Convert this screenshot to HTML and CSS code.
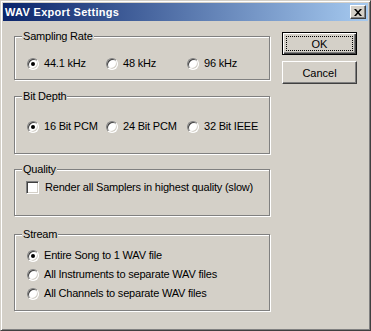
FILE: index.html
```html
<!DOCTYPE html>
<html>
<head>
  <title>WAV Export Settings</title>
  <link rel="stylesheet" href="styles.css">
</head>
<body>
  <div class="window">
    <div class="titlebar">
      <span class="title">WAV Export Settings</span>
      <span class="close-btn">
        <svg width="8" height="7" viewBox="0 0 8 7">
          <path d="M0 0h2l2 2.3 2-2.3h2l-3 3.5 3 3.5h-2l-2-2.3-2 2.3h-2l3-3.5z" fill="#000"/>
        </svg>
      </span>
    </div>

    <div class="client">
      <div class="groups">
        <div class="group group-rate">
          <span class="legend">Sampling Rate</span>
          <div class="options">
            <label class="option"><span class="radio checked"></span>44.1 kHz</label>
            <label class="option"><span class="radio"></span>48 kHz</label>
            <label class="option"><span class="radio"></span>96 kHz</label>
          </div>
        </div>

        <div class="group group-depth">
          <span class="legend">Bit Depth</span>
          <div class="options">
            <label class="option"><span class="radio checked"></span>16 Bit PCM</label>
            <label class="option"><span class="radio"></span>24 Bit PCM</label>
            <label class="option"><span class="radio"></span>32 Bit IEEE</label>
          </div>
        </div>

        <div class="group group-quality">
          <span class="legend">Quality</span>
          <label class="option"><span class="checkbox"></span>Render all Samplers in highest quality (slow)</label>
        </div>

        <div class="group group-stream">
          <span class="legend">Stream</span>
          <div class="stack">
            <label class="option"><span class="radio checked"></span>Entire Song to 1 WAV file</label>
            <label class="option"><span class="radio"></span>All Instruments to separate WAV files</label>
            <label class="option"><span class="radio"></span>All Channels to separate WAV files</label>
          </div>
        </div>
      </div>

      <div class="buttons">
        <button class="btn default">OK</button>
        <button class="btn">Cancel</button>
      </div>
    </div>
  </div>
</body>
</html>
```

FILE: styles.css
```css
body {
  margin: 0;
  background-color: #d4d0c8;
  font-family: "Liberation Sans", Arial, sans-serif;
  font-size: 11px;
  color: #000;
}

.window {
  box-sizing: border-box;
  width: 371px;
  height: 331px;
  padding: 2px;
  background-color: #d4d0c8;
  border: 1px solid;
  border-color: #d4d0c8 #404040 #404040 #d4d0c8;
  box-shadow: inset 1px 1px 0 #fff, inset -1px -1px 0 #808080;
}

.titlebar {
  display: flex;
  align-items: center;
  justify-content: space-between;
  height: 18px;
  padding: 0 2px;
  background: linear-gradient(to right, #0a246a, #a6caf0);
}

.title {
  color: #fff;
  font-weight: bold;
  letter-spacing: 0.3px;
  line-height: 18px;
}

.close-btn {
  box-sizing: border-box;
  display: flex;
  align-items: center;
  justify-content: center;
  width: 16px;
  height: 14px;
  background-color: #d4d0c8;
  border: 1px solid;
  border-color: #fff #404040 #404040 #fff;
  box-shadow: inset -1px -1px 0 #808080;
}

.client {
  display: flex;
  padding-left: 11px;
}

.groups {
  display: flex;
  flex-direction: column;
  width: 256px;
}

.group {
  position: relative;
  box-sizing: border-box;
  border: 1px solid #808080;
  box-shadow: inset 1px 1px 0 #fff, 1px 1px 0 #fff;
  padding-left: 12px;
  letter-spacing: -0.2px;
}

.group-rate {
  margin-top: 15px;
  height: 44px;
  padding-top: 20px;
}

.group-depth {
  margin-top: 16px;
  height: 58px;
  padding-top: 23px;
}

.group-quality {
  margin-top: 15px;
  height: 47px;
  padding-top: 11px;
  padding-left: 11px;
}

.group-stream {
  margin-top: 18px;
  height: 77px;
  padding-top: 14px;
}

.legend {
  position: absolute;
  top: -7px;
  left: 7px;
  padding: 0 1px;
  line-height: 13px;
  background-color: #d4d0c8;
}

.options {
  display: grid;
  grid-template-columns: 79px 81px auto;
}

.stack {
  display: flex;
  flex-direction: column;
  gap: 6px;
}

.option {
  display: flex;
  align-items: center;
  height: 13px;
  line-height: 13px;
  white-space: nowrap;
}

.radio {
  position: relative;
  box-sizing: border-box;
  width: 12px;
  height: 12px;
  margin-right: 5px;
  border-radius: 50%;
  background-color: #fff;
  border: 1px solid;
  border-color: #808080 #fff #fff #808080;
  box-shadow: inset 1px 1px 0 #404040, inset -1px -1px 0 #d4d0c8;
}

.radio.checked::after {
  content: "";
  position: absolute;
  left: 3px;
  top: 3px;
  width: 4px;
  height: 4px;
  border-radius: 50%;
  background-color: #000;
}

.checkbox {
  box-sizing: border-box;
  width: 13px;
  height: 13px;
  margin-right: 6px;
  background-color: #fff;
  border: 1px solid;
  border-color: #808080 #fff #fff #808080;
  box-shadow: inset 1px 1px 0 #404040, inset -1px -1px 0 #d4d0c8;
}

.buttons {
  display: flex;
  flex-direction: column;
  gap: 6px;
  margin-left: 12px;
  padding-top: 11px;
}

.btn {
  position: relative;
  box-sizing: border-box;
  width: 75px;
  height: 23px;
  padding: 0;
  font-family: "Liberation Sans", Arial, sans-serif;
  font-size: 11px;
  color: #000;
  background-color: #d4d0c8;
  border: 1px solid;
  border-color: #fff #404040 #404040 #fff;
  box-shadow: inset -1px -1px 0 #808080;
}

.btn.default {
  border: 1px solid #000;
  box-shadow: inset 1px 1px 0 #fff, inset -1px -1px 0 #404040, inset -2px -2px 0 #808080;
}

.btn.default::after {
  content: "";
  position: absolute;
  left: 3px;
  top: 3px;
  right: 3px;
  bottom: 3px;
  border: 1px dotted #000;
}
```
